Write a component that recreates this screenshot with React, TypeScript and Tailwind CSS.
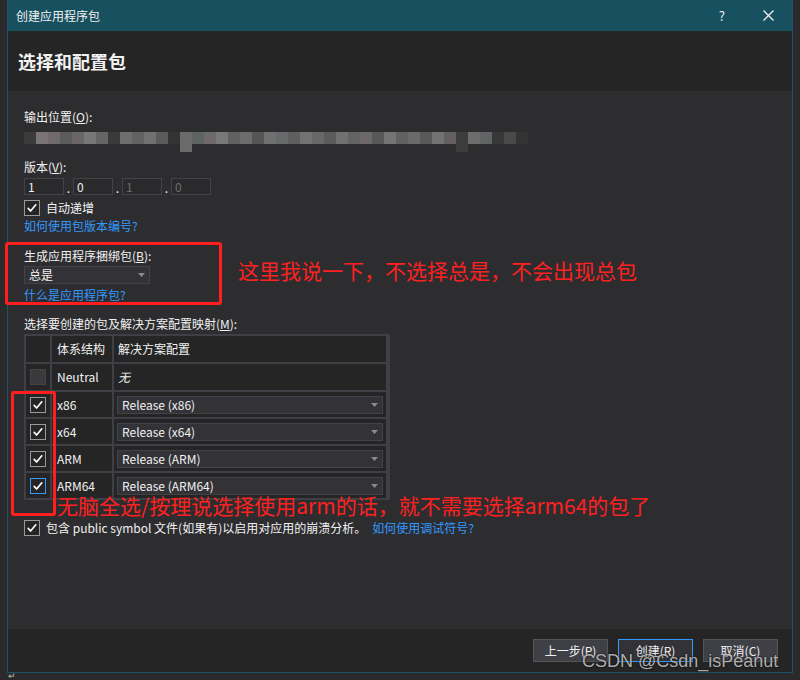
import React from 'react';

// 模糊处理的输出路径色块
const blurBlocks = [
  'bg-[#3b3b3b]', 'bg-[#7a7474]', 'bg-[#706a6a]', 'bg-[#5c5c5c]', 'bg-[#6a6666]', 'bg-[#777777]',
  'bg-[#656565]', 'bg-[#3a3a3a]', 'bg-[#6e6e6e]', 'bg-[#626262]', 'bg-[#727070]', 'bg-[#5a5a5a]',
  'bg-[#333333]', 'bg-[#6b6b6b]', 'bg-[#5e6363]', 'bg-[#6f6a6a]', 'bg-[#787878]', 'bg-[#606060]',
  'bg-[#6d6d6d]', 'bg-[#555555]', 'bg-[#707070]', 'bg-[#666a6a]', 'bg-[#5f5f5f]', 'bg-[#747171]',
  'bg-[#686868]', 'bg-[#5b5b5b]', 'bg-[#717171]', 'bg-[#636363]', 'bg-[#6c6868]', 'bg-[#585858]',
  'bg-[#767373]', 'bg-[#616161]', 'bg-[#6a6a6a]', 'bg-[#595959]', 'bg-[#727272]', 'bg-[#646060]',
  'bg-[#3c3c3c]', 'bg-[#6e6b6b]', 'bg-[#606464]', 'bg-[#383838]', 'bg-[#4a4a4a]', 'bg-[#333333]',
];

type CheckVariant = 'on' | 'focus' | 'disabled';

function CheckBox({ variant = 'on' }: { variant?: CheckVariant }) {
  if (variant === 'disabled') {
    return <div className="w-[16px] h-[16px] bg-[#3a3a3c] border border-[#434346]" />;
  }
  const border = variant === 'focus' ? 'border-[#3399ff]' : 'border-[#9a9a9a]';
  return (
    <div className={`w-[16px] h-[16px] border ${border} bg-[#252526] flex items-center justify-center`}>
      <svg width="12" height="12" viewBox="0 0 12 12" fill="none">
        <path d="M2.2 6.4 L4.6 9 L9.8 2.8" stroke="#ffffff" strokeWidth="1.7" strokeLinecap="round" strokeLinejoin="round" />
      </svg>
    </div>
  );
}

function Arrow() {
  return (
    <svg width="7" height="4" viewBox="0 0 7 4">
      <path d="M0 0 H7 L3.5 4 Z" fill="#8a8a8a" />
    </svg>
  );
}

function Dropdown({ value, className }: { value: string; className: string }) {
  return (
    <div className={`h-[18px] bg-[#333337] border border-[#434346] flex items-center justify-between pl-[4px] pr-[4px] ${className}`}>
      <span className="text-[12px] leading-[16px] text-[#f1f1f1]">{value}</span>
      <Arrow />
    </div>
  );
}

function VersionBox({ value, disabled }: { value: string; disabled?: boolean }) {
  return (
    <div className="w-[40px] h-[17px] border border-[#434346] bg-[#2a2a2c] flex items-center pl-[3px]">
      <span className={`text-[12px] leading-[15px] ${disabled ? 'text-[#6d6d6d]' : 'text-[#f1f1f1]'}`}>{value}</span>
    </div>
  );
}

const rows = [
  { arch: 'x86', config: 'Release (x86)', variant: 'on' as CheckVariant },
  { arch: 'x64', config: 'Release (x64)', variant: 'on' as CheckVariant },
  { arch: 'ARM', config: 'Release (ARM)', variant: 'on' as CheckVariant },
  { arch: 'ARM64', config: 'Release (ARM64)', variant: 'focus' as CheckVariant },
];

function ConfigTable() {
  return (
    <div className="mt-[2px] w-[366px] grid grid-cols-[24px_60px_272px] grid-rows-[26px_26px_25px_25px_25px_25px] gap-[2px] p-[2px] bg-[#3f3f46]">
      <div className="bg-[#252526]" />
      <div className="bg-[#252526] flex items-center pl-[5px] text-[12px] text-[#f1f1f1]">体系结构</div>
      <div className="bg-[#252526] flex items-center pl-[4px] text-[12px] text-[#f1f1f1]">解决方案配置</div>

      <div className="bg-[#252526] flex items-center justify-center"><CheckBox variant="disabled" /></div>
      <div className="bg-[#252526] flex items-center pl-[5px] text-[12px] text-[#f1f1f1]">Neutral</div>
      <div className="bg-[#252526] flex items-center pl-[4px] text-[12px] italic text-[#f1f1f1]">无</div>

      {rows.map((r) => (
        <React.Fragment key={r.arch}>
          <div className="bg-[#252526] flex items-center justify-center"><CheckBox variant={r.variant} /></div>
          <div className="bg-[#252526] flex items-center pl-[5px] text-[12px] text-[#f1f1f1]">{r.arch}</div>
          <div className="bg-[#252526] flex items-center px-[3px]">
            <Dropdown value={r.config} className="w-full" />
          </div>
        </React.Fragment>
      ))}
    </div>
  );
}

function Button({ label, primary }: { label: string; primary?: boolean }) {
  return (
    <div className={`w-[75px] h-[23px] flex items-center justify-center border text-[12px] text-[#f1f1f1] ${primary ? 'border-[#3399ff] bg-[#333337]' : 'border-[#555555] bg-[#3f3f46]'}`}>
      {label}
    </div>
  );
}

export default function App() {
  return (
    <div className="w-[800px] h-[680px] bg-[#2a2a2c] relative overflow-hidden font-['Noto_Sans_CJK_SC','Noto_Sans',sans-serif]">
      <div className="ml-[7px] w-[786px] h-[673px] border-x border-b border-[#1c5467] flex flex-col">
        {/* 标题栏 */}
        <div className="h-[31px] bg-[#17505f] flex items-center pl-[8px] pr-[18px] shrink-0">
          <span className="text-[12px] text-[#f1f1f1]">创建应用程序包</span>
          <span className="ml-auto text-[13px] text-[#f1f1f1] mr-[38px]">?</span>
          <svg width="11" height="11" viewBox="0 0 11 11">
            <path d="M0.5 0.5 L10.5 10.5 M10.5 0.5 L0.5 10.5" stroke="#f1f1f1" strokeWidth="1.3" />
          </svg>
        </div>

        {/* 页头 */}
        <div className="h-[60px] bg-[#252526] flex items-center pl-[10px] shrink-0">
          <span className="text-[18px] font-bold text-[#f1f1f1]">选择和配置包</span>
        </div>

        {/* 内容 */}
        <div className="flex-1 bg-[#2d2d30] pl-[16px] flex flex-col items-start text-[12px] leading-[16px] text-[#f1f1f1]">
          <div className="mt-[18px]">输出位置(<span className="underline">O</span>):</div>
          <div className="mt-[7px] h-[12px] flex items-start">
            {blurBlocks.map((c, i) => (
              <div key={i} className={`w-[12px] ${i === 13 || i === 36 ? 'h-[20px]' : 'h-[12px]'} ${c}`} />
            ))}
          </div>

          <div className="mt-[15px]">版本(<span className="underline">V</span>):</div>
          <div className="mt-[3px] flex items-end">
            <VersionBox value="1" />
            <span className="w-[9px] text-center leading-[14px]">.</span>
            <VersionBox value="0" />
            <span className="w-[9px] text-center leading-[14px]">.</span>
            <VersionBox value="1" disabled />
            <span className="w-[9px] text-center leading-[14px]">.</span>
            <VersionBox value="0" disabled />
          </div>
          <div className="mt-[5px] flex items-center gap-[6px]">
            <CheckBox />
            <span>自动递增</span>
          </div>
          <div className="mt-[2px] text-[#3399ff]">如何使用包版本编号?</div>

          <div className="mt-[14px]">生成应用程序捆绑包(<span className="underline">B</span>):</div>
          <Dropdown value="总是" className="mt-[2px] w-[126px]" />
          <div className="mt-[3px] text-[#3399ff]">什么是应用程序包?</div>

          <div className="mt-[13px]">选择要创建的包及解决方案配置映射(<span className="underline">M</span>):</div>
          <ConfigTable />

          <div className="mt-[20px] flex items-center gap-[6px]">
            <CheckBox />
            <span>包含 public symbol 文件(如果有)以启用对应用的崩溃分析。</span>
            <span className="text-[#3399ff]">如何使用调试符号?</span>
          </div>
        </div>

        {/* 底部按钮 */}
        <div className="h-[43px] bg-[#252526] shrink-0 flex items-start justify-end gap-[10px] pt-[10px] pr-[14px]">
          <Button label="上一步(P)" />
          <Button label="创建(R)" primary />
          <Button label="取消(C)" />
        </div>
      </div>

      <div className="absolute left-[8px] top-[671px] text-[9px] leading-[9px] text-[#bbbbbb]">↵</div>

      {/* 标注 */}
      <div className="absolute left-[5px] top-[242px] w-[217px] h-[63px] border-[3px] border-[#ff1f1f] rounded-[3px]" />
      <div className="absolute left-[238px] top-[256px] text-[21px] leading-[28px] text-[#ff2020]">
        这里我说一下，不选择总是，不会出现总包
      </div>
      <div className="absolute left-[11px] top-[391px] w-[45px] h-[125px] border-[3px] border-[#ff1f1f] rounded-[3px]" />
      <div className="absolute left-[57px] top-[491px] text-[21px] leading-[28px] text-[#ff2020]">
        无脑全选/按理说选择使用arm的话，就不需要选择arm64的包了
      </div>
      <div className="absolute left-[582px] top-[650px] font-['Liberation_Sans',sans-serif] text-[18px] leading-[22px] text-[#d8d8d8]/80 [text-shadow:0_0_2px_#000]">
        CSDN @Csdn_isPeanut
      </div>
    </div>
  );
}
